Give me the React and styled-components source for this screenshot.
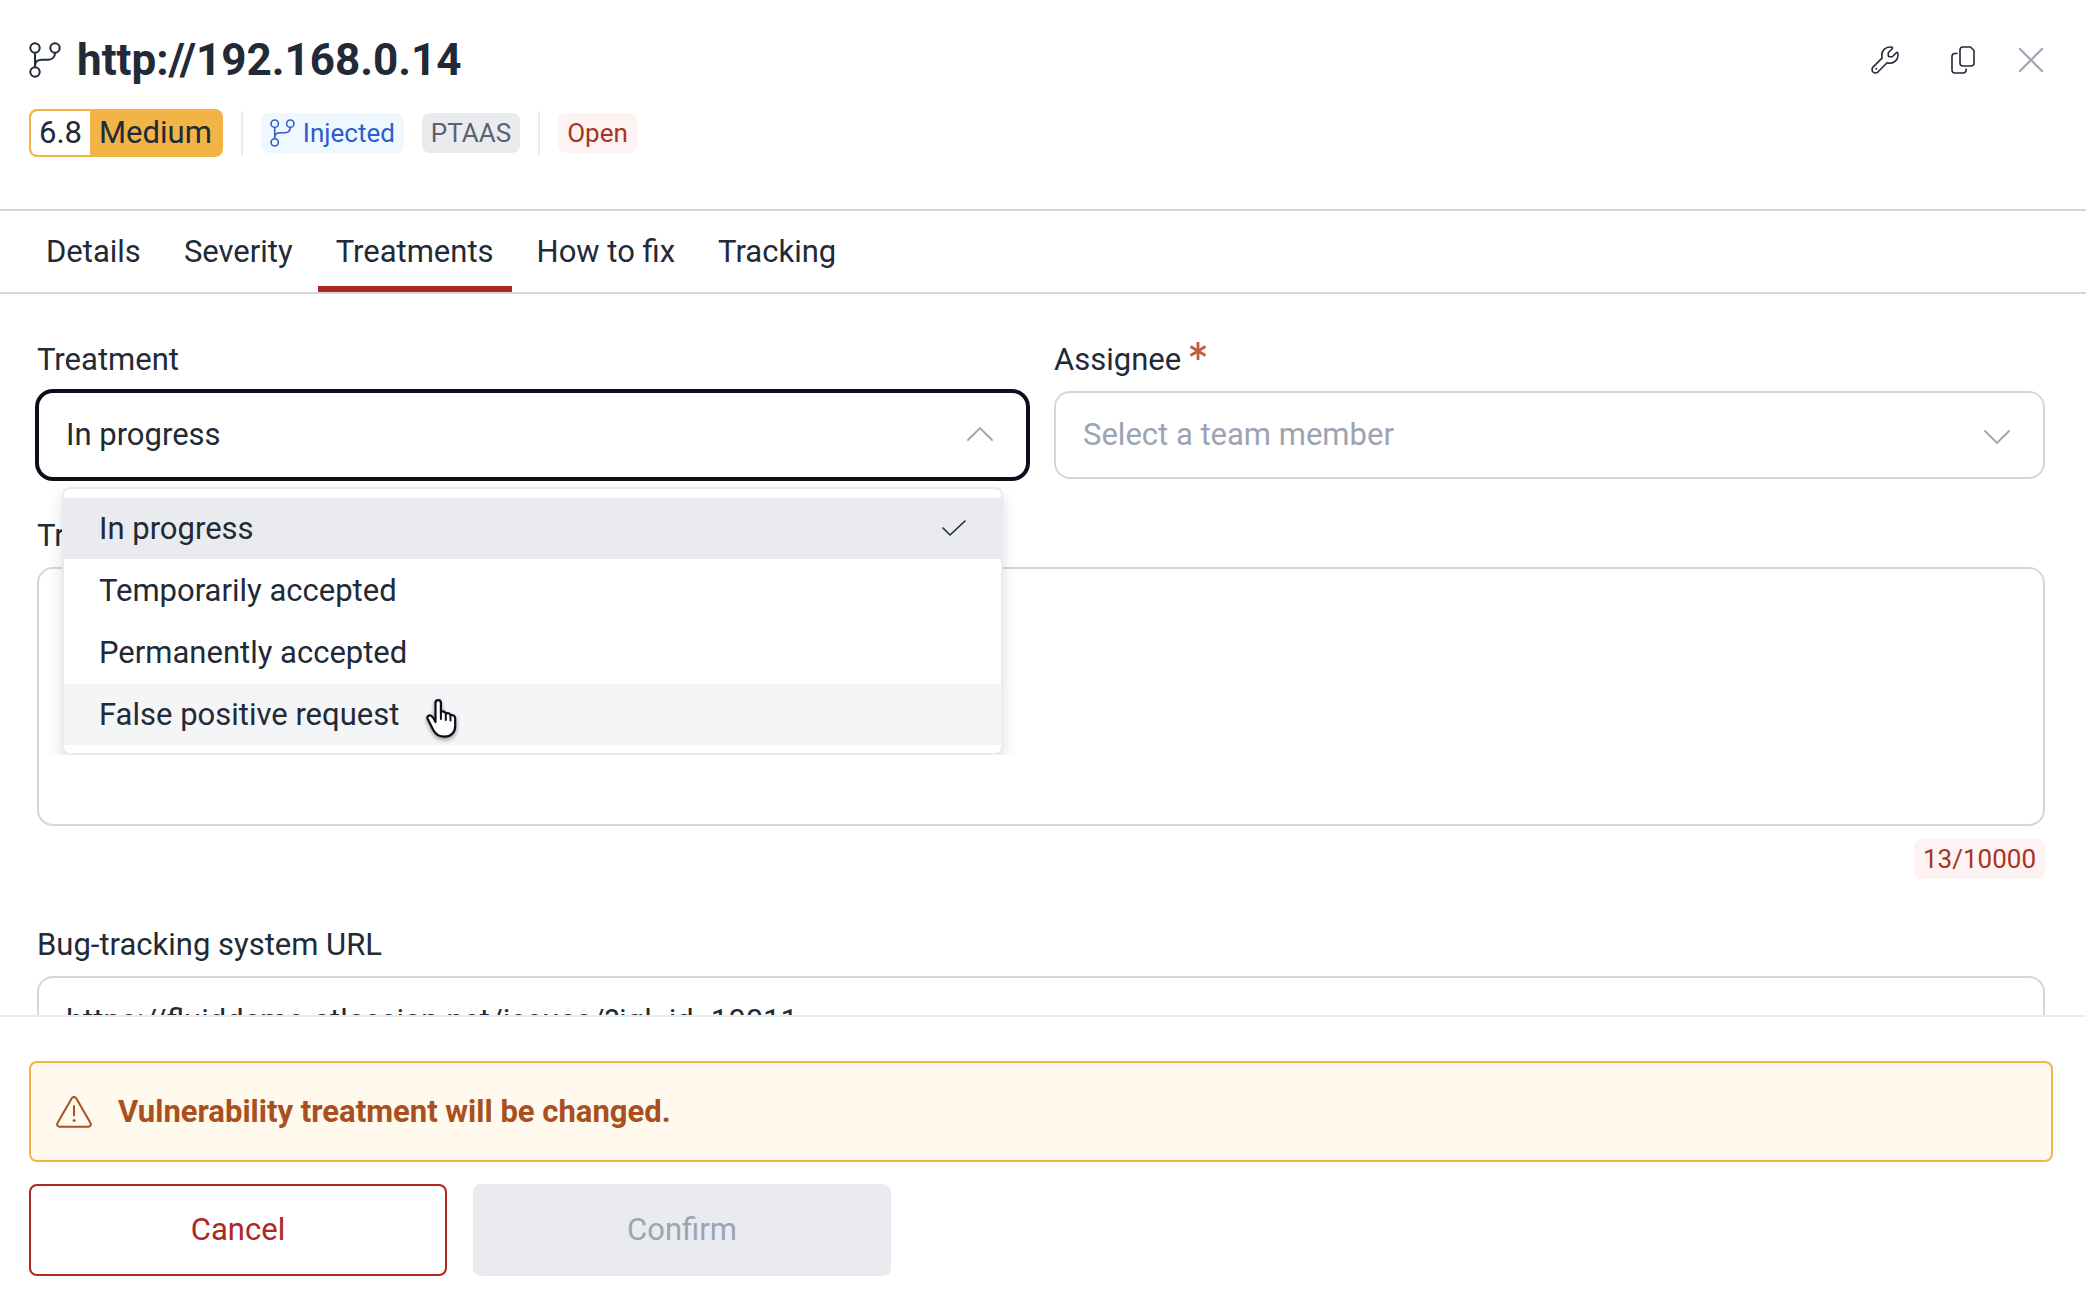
/* eslint-disable react/prop-types */
import { useState } from "react";
import { createGlobalStyle, styled } from "styled-components";

const COLORS = {
  text: "#212a36",
  muted: "#9ca3b3",
  border: "#d2d6dd",
  soft: "#eaebef",
  hover: "#f3f5f7",
  focus: "#0a0f1b",
  red: "#af2622",
  yellow: "#f2b347",
  warning: "#a94f20",
};

const TABS = ["Details", "Severity", "Treatments", "How to fix", "Tracking"];

const TREATMENTS = [
  "In progress",
  "Temporarily accepted",
  "Permanently accepted",
  "False positive request",
];

function BranchIcon({ width, height, stroke }) {
  return (
    <svg
      width={width}
      height={height}
      viewBox="0 0 32 36"
      fill="none"
      stroke="currentColor"
      strokeWidth={stroke}
      aria-hidden="true"
    >
      <circle cx="6" cy="6" r="4.7" />
      <circle cx="26" cy="6" r="4.7" />
      <circle cx="6" cy="30" r="4.7" />
      <path d="M6 10.7v14.6M26 10.7c0 4.4-2.8 7-7 7h-6c-4.500 0-7 2.200-7 6.300" />
    </svg>
  );
}

function WrenchIcon() {
  return (
    <svg width="28" height="28" viewBox="-20 -20 552 552" aria-hidden="true">
      <path
        fill="none"
        stroke="currentColor"
        strokeWidth="31"
        strokeLinejoin="round"
        d="M352 320c88.4 0 160-71.6 160-160 0-15.300-2.200-30.100-6.200-44.200-3.100-10.800-16.400-13.200-24.300-5.300l-76.800 76.800c-3 3-7.100 4.700-11.300 4.700H356c-20 0-36-16-36-36v-37.400c0-4.200 1.700-8.300 4.700-11.300l76.800-76.800c7.900-7.900 5.400-21.200-5.300-24.300C382.100 2.200 367.300 0 352 0c-88.400 0-160 71.600-160 160 0 19.100 3.400 37.500 9.500 54.500L19.900 396.100C7.200 408.800 0 426.100 0 444.100 0 481.600 30.400 512 67.900 512c18 0 35.300-7.200 48-19.900l181.600-181.600c17 6.200 35.400 9.500 54.500 9.500z"
      />
      <circle cx="84" cy="428" r="18" fill="currentColor" />
    </svg>
  );
}

function CopyIcon() {
  return (
    <svg
      width="24"
      height="28"
      viewBox="0 0 24 28"
      fill="none"
      stroke="currentColor"
      strokeWidth="1.600"
      strokeLinejoin="round"
      aria-hidden="true"
    >
      <path d="M12 1h7.500L23 4.500V17a3 3 0 0 1-3 3h-8a3 3 0 0 1-3-3V4a3 3 0 0 1 3-3z" />
      <path d="M6.500 7.500H4a3 3 0 0 0-3 3V24a3 3 0 0 0 3 3h8a3 3 0 0 0 3-3v-1.500" />
    </svg>
  );
}

function CloseIcon() {
  return (
    <svg width="26" height="26" viewBox="0 0 26 26" aria-hidden="true">
      <path
        d="M2 2l22 22M24 2L2 24"
        stroke="currentColor"
        strokeWidth="2.200"
        strokeLinecap="round"
      />
    </svg>
  );
}

function ChevronIcon({ up }) {
  return (
    <svg
      width="26"
      height="18"
      viewBox="0 0 26 18"
      fill="none"
      stroke="currentColor"
      strokeWidth="1.800"
      strokeLinecap="round"
      aria-hidden="true"
    >
      <path d={up ? "M1 13L13 1l12 12" : "M1 4l12 12L25 4"} />
    </svg>
  );
}

function CheckIcon() {
  return (
    <svg width="24" height="18" viewBox="0 0 24 18" aria-hidden="true">
      <path
        d="M1 8l7 7L23 1"
        fill="none"
        stroke="currentColor"
        strokeWidth="1.600"
        strokeLinecap="round"
      />
    </svg>
  );
}

function WarningIcon() {
  return (
    <svg
      width="36"
      height="32"
      viewBox="0 0 36 32"
      fill="none"
      stroke="currentColor"
      strokeWidth="2"
      strokeLinecap="round"
      strokeLinejoin="round"
      aria-hidden="true"
    >
      <path d="M15.800 2.300a2.500 2.500 0 0 1 4.400 0L34.500 27a2.500 2.500 0 0 1-2.200 3.800H3.700A2.500 2.500 0 0 1 1.500 27z" />
      <path d="M18 10v9.500" />
      <circle cx="18" cy="24.500" r="1" fill="currentColor" strokeWidth="1" />
    </svg>
  );
}

function RequiredMark() {
  return (
    <svg width="18" height="20" viewBox="0 0 18 20" aria-hidden="true">
      <path
        d="M9 0v18M1.500 4.500l15 9M16.500 4.500l-15 9"
        stroke="#bf5f3c"
        strokeWidth="2.800"
      />
    </svg>
  );
}

function HandCursor() {
  return (
    <svg width="36" height="44" viewBox="0 0 36 44" aria-hidden="true">
      <path
        d="M9.500 24V4.800a2.700 2.700 0 0 1 5.400 0v9.400c1.800-1.400 4.400-.6 4.900 1.400 1.800-1.100 4.200-.3 4.700 1.700 2.300-.9 4.700.6 4.700 3.200v7.500c0 6.600-4.400 10.700-10.600 10.700-5.600 0-8.800-2.200-11.200-6.500L1.600 20.700c-1-2.400 1.600-4.500 3.900-2.700 1.800 1.500 3 3.600 4 6z"
        fill="#fff"
        stroke="#0a0d16"
        strokeWidth="2.200"
        strokeLinejoin="round"
      />
      <path
        d="M14.900 14v7M19.800 15.600V22M24.500 17.300v5.200"
        fill="none"
        stroke="#0a0d16"
        strokeWidth="2"
        strokeLinecap="round"
      />
    </svg>
  );
}

function App() {
  const [tab, setTab] = useState("Treatments");
  const [treatment, setTreatment] = useState("In progress");

  return (
    <>
      <GlobalStyle />
      <Panel>
        <Header>
          <TitleRow>
            <BranchIcon width={32} height={36} stroke={2} />
            <Title>http://192.168.0.14</Title>
            <Actions>
              <ActionGroup>
                <IconButton aria-label="Fix">
                  <WrenchIcon />
                </IconButton>
                <IconButton aria-label="Copy">
                  <CopyIcon />
                </IconButton>
              </ActionGroup>
              <IconButton aria-label="Close" $muted>
                <CloseIcon />
              </IconButton>
            </Actions>
          </TitleRow>
          <TagRow>
            <SeverityBadge>
              <Score>6.8</Score>
              <Level>Medium</Level>
            </SeverityBadge>
            <Divider />
            <Tag $color="#2e5ccb" $background="#eff8ff">
              <BranchIcon width={25} height={28} stroke={2} />
              Injected
            </Tag>
            <Tag $color="#5a616f" $background={COLORS.soft}>
              PTAAS
            </Tag>
            <Divider />
            <Tag $color="#a83423" $background="#fdf3f2">
              Open
            </Tag>
          </TagRow>
        </Header>

        <Tabs>
          {TABS.map((name) => (
            <Tab
              key={name}
              href="#"
              $active={name === tab}
              onClick={() => setTab(name)}
            >
              {name}
            </Tab>
          ))}
        </Tabs>

        <Content>
          <Columns>
            <Field>
              <Label htmlFor="treatment">Treatment</Label>
              <SelectBox>
                <Select
                  id="treatment"
                  $focused
                  value={treatment}
                  onChange={(event) => setTreatment(event.target.value)}
                >
                  {TREATMENTS.map((name) => (
                    <option key={name}>{name}</option>
                  ))}
                </Select>
                <SelectArrow>
                  <ChevronIcon up />
                </SelectArrow>
                <Menu role="listbox" aria-label="Treatment options">
                  {TREATMENTS.map((name) => (
                    <MenuItem
                      key={name}
                      role="option"
                      aria-selected={name === treatment}
                      $selected={name === treatment}
                      $hovered={name === "False positive request"}
                      onClick={() => setTreatment(name)}
                    >
                      {name}
                      {name === treatment && <CheckIcon />}
                    </MenuItem>
                  ))}
                  <Pointer>
                    <HandCursor />
                  </Pointer>
                </Menu>
              </SelectBox>
            </Field>
            <Field>
              <Label htmlFor="assignee">
                Assignee
                <RequiredMark />
              </Label>
              <SelectBox>
                <Select id="assignee" $placeholder defaultValue="">
                  <option value="">Select a team member</option>
                </Select>
                <SelectArrow>
                  <ChevronIcon />
                </SelectArrow>
              </SelectBox>
            </Field>
          </Columns>

          <Field>
            <Label htmlFor="justification">Treatment justification</Label>
            <TextArea id="justification" />
            <Counter $color="#a83423" $background="#fdf3f2">
              13/10000
            </Counter>
          </Field>

          <Field>
            <Label htmlFor="bts">Bug-tracking system URL</Label>
            <Input
              id="bts"
              defaultValue="https://fluiddemo.atlassian.net/issues/?jql=id=10011"
            />
          </Field>
        </Content>

        <Footer>
          <Alert role="alert">
            <WarningIcon />
            Vulnerability treatment will be changed.
          </Alert>
          <Buttons>
            <Button>Cancel</Button>
            <Button disabled>Confirm</Button>
          </Buttons>
        </Footer>
      </Panel>
    </>
  );
}

export default App;

const GlobalStyle = createGlobalStyle`
  * {
    box-sizing: border-box;
  }

  body {
    margin: 0;
    background: #fff;
    color: ${COLORS.text};
    font-family: Roboto, "Liberation Sans", sans-serif;
    font-size: 31px;
    line-height: 36px;
  }

  button, input, select, textarea {
    font: inherit;
    color: inherit;
  }

  svg {
    display: block;
    flex: none;
  }
`;

const Panel = styled.div`
  display: flex;
  flex-direction: column;
  height: 100vh;
  overflow: hidden;
`;

const Header = styled.header`
  flex: none;
  padding: 34px 33px 52px 29px;
  border-bottom: 2px solid ${COLORS.border};
`;

const TitleRow = styled.div`
  display: flex;
  align-items: center;
  gap: 16px;
  margin-bottom: 23px;
`;

const Title = styled.h1`
  margin: 0;
  font-size: 44px;
  line-height: 52px;
  font-weight: 700;
`;

const Actions = styled.div`
  display: flex;
  align-items: center;
  gap: 24px;
  margin-left: auto;
`;

const ActionGroup = styled.div`
  display: flex;
  gap: 34px;
`;

const IconButton = styled.button`
  display: flex;
  align-items: center;
  justify-content: center;
  width: 44px;
  height: 44px;
  padding: 0;
  border: none;
  background: none;
  color: ${({ $muted }) => ($muted ? COLORS.muted : COLORS.text)};
  cursor: pointer;
`;

const TagRow = styled.div`
  display: flex;
  align-items: center;
  gap: 18px;
`;

const SeverityBadge = styled.div`
  display: flex;
  height: 48px;
  border: 2px solid ${COLORS.yellow};
  border-radius: 8px;
  background: ${COLORS.yellow};
  line-height: 44px;
  overflow: hidden;
`;

const Score = styled.span`
  padding: 0 8px;
  border-radius: 6px 0 0 6px;
  background: #fff;
`;

const Level = styled.span`
  padding: 0 9px;
`;

const Divider = styled.span`
  width: 2px;
  height: 44px;
  background: ${COLORS.soft};
`;

const Tag = styled.span`
  display: flex;
  align-items: center;
  gap: 8px;
  height: 40px;
  padding: 0 9px;
  border-radius: 8px;
  font-size: 26px;
  color: ${({ $color }) => $color};
  background: ${({ $background }) => $background};
`;

const Tabs = styled.nav`
  display: flex;
  flex: none;
  gap: 7px;
  height: 83px;
  padding: 0 28px;
  border-bottom: 2px solid ${COLORS.border};
`;

const Tab = styled.a`
  display: flex;
  align-items: center;
  padding: 6px 18px 0;
  border-bottom: 6px solid
    ${({ $active }) => ($active ? COLORS.red : "transparent")};
  color: inherit;
  text-decoration: none;
`;

const Content = styled.main`
  display: flex;
  flex: 1;
  flex-direction: column;
  gap: 39px;
  min-height: 0;
  padding: 48px 41px 0 37px;
  overflow: hidden;
`;

const Columns = styled.div`
  display: grid;
  grid-template-columns: 1fr 1fr;
  gap: 26px;
`;

const Field = styled.div`
  display: flex;
  flex: none;
  flex-direction: column;
`;

const Label = styled.label`
  display: flex;
  gap: 8px;
  margin-bottom: 13px;
`;

const SelectBox = styled.div`
  position: relative;
`;

const Select = styled.select`
  display: block;
  width: 100%;
  height: 88px;
  padding: 0 27px;
  border: 2px solid
    ${({ $focused }) => ($focused ? COLORS.focus : COLORS.border)};
  border-radius: 16px;
  box-shadow: ${({ $focused }) =>
    $focused ? `0 0 0 2px ${COLORS.focus}` : "none"};
  background: #fff;
  color: ${({ $placeholder }) => ($placeholder ? COLORS.muted : COLORS.text)};
  appearance: none;
  outline: none;
`;

const SelectArrow = styled.span`
  position: absolute;
  top: 36px;
  right: 35px;
  color: ${COLORS.muted};
  pointer-events: none;
`;

const Menu = styled.ul`
  position: absolute;
  z-index: 1;
  top: 96px;
  left: 25px;
  right: 25px;
  display: flex;
  flex-direction: column;
  gap: 1px;
  margin: 0;
  padding: 9px 0 8px;
  border: 2px solid ${COLORS.soft};
  border-radius: 8px;
  background: #fff;
  box-shadow: 0 8px 16px rgba(16, 24, 40, 0.14);
  clip-path: inset(0 -12px 0 -12px);
  list-style: none;
`;

const MenuItem = styled.li`
  display: flex;
  align-items: center;
  justify-content: space-between;
  height: 61px;
  padding: 0 35px;
  background: ${({ $selected, $hovered }) =>
    $selected ? COLORS.soft : $hovered ? COLORS.hover : "#fff"};
  cursor: pointer;
`;

const Pointer = styled.li`
  position: absolute;
  left: 362px;
  bottom: 11px;
  filter: drop-shadow(0 2px 2px rgba(0, 0, 0, 0.4));
  pointer-events: none;
`;

const TextArea = styled.textarea`
  height: 259px;
  padding: 20px 27px;
  border: 2px solid ${COLORS.border};
  border-radius: 16px;
  outline: none;
  resize: none;
`;

const Counter = styled(Tag)`
  align-self: flex-end;
  margin: 13px 0 9px;
`;

const Input = styled.input`
  height: 88px;
  padding: 0 27px;
  border: 2px solid ${COLORS.border};
  border-radius: 16px;
  outline: none;
`;

const Footer = styled.footer`
  flex: none;
  padding: 44px 33px 30px 29px;
  border-top: 2px solid ${COLORS.soft};
`;

const Alert = styled.div`
  display: flex;
  align-items: center;
  gap: 26px;
  min-height: 101px;
  padding: 0 25px;
  border: 2px solid ${COLORS.yellow};
  border-radius: 8px;
  background: #fffaed;
  color: ${COLORS.warning};
  font-weight: 700;
`;

const Buttons = styled.div`
  display: flex;
  gap: 26px;
  margin-top: 22px;
`;

const Button = styled.button`
  flex: 0 1 418px;
  height: 92px;
  border: 2px solid ${COLORS.red};
  border-radius: 8px;
  background: #fff;
  color: ${COLORS.red};
  cursor: pointer;

  &:disabled {
    border-color: ${COLORS.soft};
    background: ${COLORS.soft};
    color: ${COLORS.muted};
    cursor: default;
  }
`;
